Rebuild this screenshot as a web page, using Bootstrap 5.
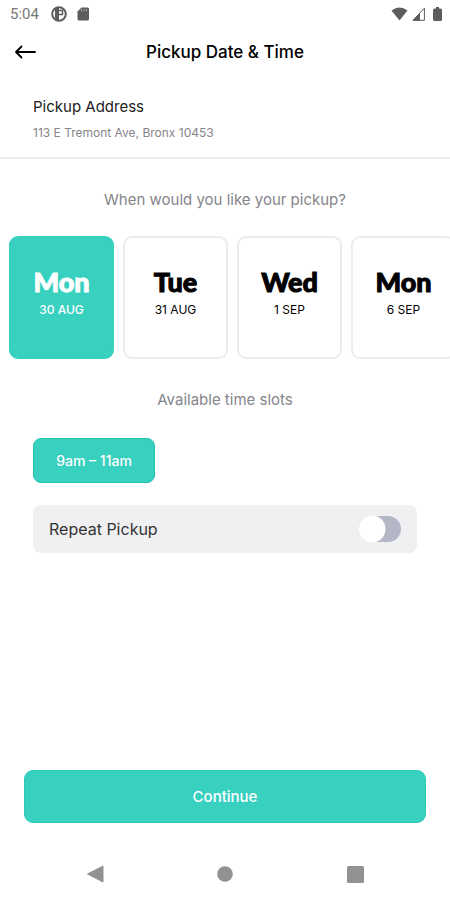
<!DOCTYPE html>
<html lang="en">
<head>
<meta charset="utf-8">
<meta name="viewport" content="width=device-width, initial-scale=1">
<title>Pickup Date &amp; Time</title>
<link href="https://cdn.jsdelivr.net/npm/bootstrap@5.3.0/dist/css/bootstrap.min.css" rel="stylesheet">
<style>
  :root { --brand: #38d0bf; --muted: #85858a; }
  body { font-family: Inter, "Liberation Sans", sans-serif; color: #000; background: #fff; }
  svg { display: block; flex: none; }
  .status-bar { height: 28px; padding: 0 8px 0 10px; color: #5c5c5c; }
  .clock { font: 15px/20px Roboto, sans-serif; color: #777; }
  .app-bar { display: grid; grid-template-columns: 50px 1fr 50px; height: 48px; }
  .back { padding: 0 0 0 14px; color: #000; }
  .app-bar h1 { font-size: 17px; line-height: 24px; font-weight: 500; }
  .address { padding: 19px 33px 16px; border-bottom: 2px solid #ededee; }
  .address h2 { font-size: 15px; line-height: 24px; font-weight: 400; color: #222; }
  .address p { font-size: 12px; line-height: 16px; color: var(--muted); margin-top: 6px; }
  .prompt { font-size: 15px; line-height: 24px; font-weight: 400; color: var(--muted); padding: 29px 0 24px; }
  .days { gap: 9px; padding: 0 9px; overflow-x: auto; scrollbar-width: none; }
  .days::-webkit-scrollbar { display: none; }
  .day { flex: 0 0 105px; height: 123px; padding: 0 0 8px; border: 2px solid #ececed; border-radius: 9px; background: #fff; color: #000; }
  .day strong { font: 900 27px/32px Lato, sans-serif; -webkit-text-stroke: 1px currentColor; }
  .day span { font-size: 12px; line-height: 24px; }
  .day.chosen { background: var(--brand); border-color: var(--brand); color: #fff; }
  .day.chosen span { font-weight: 500; }
  .slot, .slot:hover { background: var(--brand); border: 1px solid #20c6b2; border-radius: 8px; color: #fff; width: 122px; height: 45px; font-size: 14px; font-weight: 500; padding: 0; }
  .repeat { background: #f0f0f2; border-radius: 8px; height: 48px; padding: 0 16px; margin-top: 22px; color: #333; }
  .repeat label { font-size: 16px; line-height: 24px; }
  .toggle { appearance: none; width: 42px; height: 26px; border-radius: 13px; margin: 0; background: radial-gradient(circle at 13px 13px, #fff 13px, #b4b7c5 14px); }
  .toggle:checked { background: radial-gradient(circle at 29px 13px, #fff 13px, var(--brand) 14px); }
  .side { padding: 2px 33px 0; }
  .continue, .continue:hover { background: var(--brand); border: 1px solid #2acbb8; border-radius: 9px; color: #fff; height: 53px; font-size: 15px; font-weight: 500; padding: 8px 0 6px; }
  .system-nav { height: 77px; padding: 0 60px 2px; color: #929292; }
  .system-nav button { width: 70px; height: 48px; color: inherit; }
</style>
</head>
<body>
<div class="d-flex flex-column min-vh-100">
  <div class="status-bar d-flex align-items-center justify-content-between">
    <div class="d-flex align-items-center">
      <span class="clock me-2">5:04</span>
      <svg class="ms-1" width="16" height="16" viewBox="0 0 16 16"><circle cx="8" cy="8" r="6.800" fill="none" stroke="currentColor" stroke-width="2"/><path d="M4 2H8V14.400H6.500A7 7 0 0 1 4 12Z" fill="currentColor"/><path d="M8 4.500h3.500v4H8" fill="none" stroke="currentColor" stroke-width="1.500"/></svg>
      <svg class="ms-2" width="16" height="16" viewBox="0 0 16 16"><path d="M6.500 1.500H12.500Q14 1.500 14 3V13Q14 14.500 12.500 14.500H4Q2.500 14.500 2.500 13V5.500Z" fill="currentColor"/><path d="M6.500 3v2.500M9 3v2.500M11.500 3v2.500" stroke="#a5a5a5"/></svg>
    </div>
    <div class="d-flex align-items-center">
      <svg width="17" height="14" viewBox="0 0 17 14"><path d="M.5 3.500Q8.500-2.500 16.500 3.500L8.500 13.500Z" fill="currentColor"/></svg>
      <svg class="ms-1" width="13" height="14" viewBox="0 0 13 14"><path d="M1 13.300 12.400 1.200V13.300Z" fill="none" stroke="currentColor"/><path d="M.5 13.500 8 6V13.500Z" fill="currentColor"/></svg>
      <svg class="ms-2" width="9" height="14" viewBox="0 0 9 14"><path d="M3 0h3v1.500H7.500Q9 1.500 9 3V12.500Q9 14 7.500 14H1.500Q0 14 0 12.500V3Q0 1.500 1.500 1.500H3Z" fill="currentColor"/></svg>
    </div>
  </div>

  <header class="app-bar align-items-center">
    <button class="btn border-0 back" type="button" aria-label="Back">
      <svg width="22" height="16" viewBox="0 0 22 16" fill="none" stroke="currentColor" stroke-width="1.800" stroke-linecap="round" stroke-linejoin="round"><path d="M21 8H2M7.500 2.500 2 8l5.500 5.500"/></svg>
    </button>
    <h1 class="m-0 text-center">Pickup Date &amp; Time</h1>
  </header>

  <section class="address">
    <h2 class="m-0">Pickup Address</h2>
    <p class="mb-0">113 E Tremont Ave, Bronx 10453</p>
  </section>

  <main>
    <h2 class="prompt text-center m-0">When would you like your pickup?</h2>
    <div class="days d-flex">
      <button class="day chosen d-flex flex-column align-items-center justify-content-center" type="button" aria-pressed="true"><strong>Mon</strong><span>30 AUG</span></button>
      <button class="day d-flex flex-column align-items-center justify-content-center" type="button"><strong>Tue</strong><span>31 AUG</span></button>
      <button class="day d-flex flex-column align-items-center justify-content-center" type="button"><strong>Wed</strong><span>1 SEP</span></button>
      <button class="day d-flex flex-column align-items-center justify-content-center" type="button"><strong>Mon</strong><span>6 SEP</span></button>
    </div>
    <h2 class="prompt text-center m-0">Available time slots</h2>
    <div class="side">
      <button class="btn slot" type="button">9am – 11am</button>
      <div class="repeat d-flex align-items-center justify-content-between">
        <label for="repeat">Repeat Pickup</label>
        <input class="toggle" type="checkbox" role="switch" id="repeat">
      </div>
    </div>
  </main>

  <footer class="mt-auto">
    <div class="px-4"><button class="btn continue w-100" type="button">Continue</button></div>
    <nav class="system-nav d-flex align-items-end justify-content-between" aria-label="System">
      <button class="btn border-0 p-0 d-flex justify-content-center align-items-center" type="button" aria-label="Back"><svg width="18" height="18" viewBox="0 0 18 18"><path d="M17 1V17L1.500 9Z" fill="currentColor" stroke="currentColor" stroke-linejoin="round"/></svg></button>
      <button class="btn border-0 p-0 d-flex justify-content-center align-items-center" type="button" aria-label="Home"><svg width="16" height="16" viewBox="0 0 16 16"><circle cx="8" cy="8" r="7.800" fill="currentColor"/></svg></button>
      <button class="btn border-0 p-0 d-flex justify-content-center align-items-center" type="button" aria-label="Overview"><svg width="17" height="17" viewBox="0 0 17 17"><rect width="17" height="17" rx="1.500" fill="currentColor"/></svg></button>
    </nav>
  </footer>
</div>
<script src="https://cdn.jsdelivr.net/npm/bootstrap@5.3.0/dist/js/bootstrap.bundle.min.js"></script>
</body>
</html>
